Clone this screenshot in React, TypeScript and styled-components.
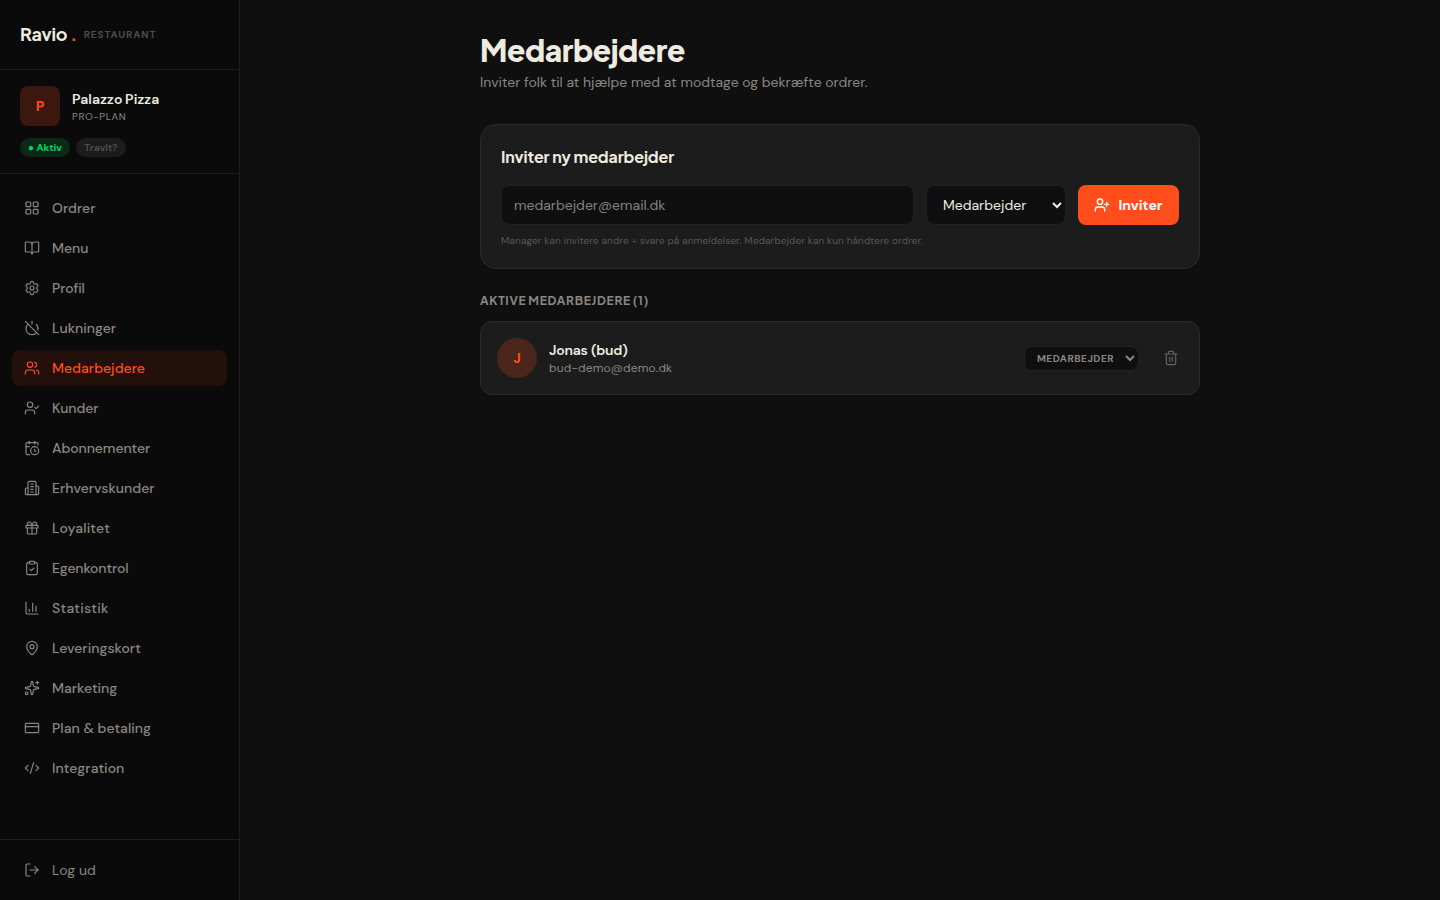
import React from "react";
import styled, { createGlobalStyle, css } from "styled-components";
import {
  LayoutGrid, BookOpen, Settings, PowerOff, Users, UserCheck, CalendarClock, Gift,
  ClipboardCheck, ChartColumn, MapPin, Sparkles, CreditCard, CodeXml, LogOut, UserPlus, Trash2,
} from "lucide-react";

const GlobalStyle = createGlobalStyle`
  *, *::before, *::after { box-sizing: border-box; }
  body { margin: 0; background: #0f0f0f; color: #f0ebe0; font-family: "DM Sans", sans-serif; font-size: 14px; line-height: 20px; }
  h1, h2, p { margin: 0; }
  button, input, select { font-family: inherit; }
`;

const display = css`font-family: "Plus Jakarta Sans", sans-serif;`;

const Shell = styled.div`display: flex; height: 100vh;`;
const Sidebar = styled.aside`
  display: flex; flex-direction: column; flex: 0 0 240px;
  background: #0a0a0a; border-right: 1px solid #1e1e1e;
`;
const Brand = styled.div`
  display: flex; align-items: center; height: 70px; padding: 0 20px; border-bottom: 1px solid #1e1e1e;
`;
const BrandName = styled.span`${display} padding-bottom: 2px; font-size: 18px; font-weight: 750; letter-spacing: -0.3px;`;
const BrandDot = styled(BrandName)`color: #ff4d1c; margin-left: 3px;`;
const BrandTag = styled.span`margin-left: 7px; font-size: 10px; font-weight: 700; letter-spacing: 0.9px; color: #4f4d49;`;
const Restaurant = styled.div`padding: 16px 20px; border-bottom: 1px solid #1e1e1e;`;
const Identity = styled.div`display: flex; align-items: center; gap: 12px;`;
const Avatar = styled.div<{ $round?: boolean }>`
  display: flex; align-items: center; justify-content: center; width: 40px; height: 40px;
  border-radius: ${(p) => (p.$round ? "50%" : "8px")};
  background: ${(p) => (p.$round ? "#4a251b" : "#3b170d")};
  color: #ff4d1c; font-weight: 700; font-size: 14px;
`;
const RestaurantName = styled.div`font-weight: 600; line-height: 20px; letter-spacing: 0.13px; word-spacing: -1px;`;
const Plan = styled.div`font-size: 10px; line-height: 15px; letter-spacing: 0.6px; color: #8a8780;`;
const Pills = styled.div`display: flex; gap: 6px; margin-top: 12px;`;
const Pill = styled.span<{ $on?: boolean }>`
  display: flex; align-items: center; justify-content: center; width: 50px; height: 19px; border-radius: 10px;
  font-size: 10px; font-weight: 700;
  ${(p) => p.$on ? css`background: #0a2917; color: #00d563;` : css`background: #1c1c1c; color: #4f4d49;`}
`;
const Nav = styled.nav`display: flex; flex-direction: column; flex: 1; gap: 4px; padding: 16px 12px;`;
const NavItem = styled.a<{ $active?: boolean; $tracking?: number }>`
  display: flex; align-items: center; gap: 12px; height: 36px; padding: 0 12px; border-radius: 8px;
  font-weight: 500; letter-spacing: ${(p) => p.$tracking ?? 0}px;
  color: ${(p) => (p.$active ? "#ff4d1c" : "#8a8780")};
  background: ${(p) => (p.$active ? "#23100a" : "transparent")};
`;
const SidebarFooter = styled.div`padding: 12px; border-top: 1px solid #1e1e1e;`;
const LogoutItem = styled(NavItem)`font-weight: 400;`;

const Main = styled.main`flex: 1; display: flex; justify-content: center;`;
const Content = styled.div`width: 720px; padding-top: 32px;`;
const Title = styled.h1`${display} font-size: 30px; line-height: 36px; font-weight: 800; letter-spacing: -0.4px;`;
const Subtitle = styled.p`margin-top: 4px; color: #8a8780;`;
const Card = styled.section`
  height: 145px; margin-top: 32px; padding: 20px; border: 1px solid #2a2a2a; border-radius: 16px; background: #1c1c1c;
`;
const CardTitle = styled.h2`${display} font-size: 16px; line-height: 24px; font-weight: 700; letter-spacing: -0.1px;`;
const InviteRow = styled.form`display: flex; gap: 12px; margin-top: 16px;`;
const EmailInput = styled.input`
  flex: 1; height: 40px; padding: 0 12px; border: 1px solid #222; border-radius: 8px;
  background: #0f0f0f; color: #f0ebe0; font-size: 14px; outline: none;
  &::placeholder { color: #85827b; opacity: 1; }
`;
const RoleSelect = styled.select`
  width: 140px; height: 40px; padding: 0 12px; border: 1px solid #222; border-radius: 8px;
  background: #0f0f0f; color: #f0ebe0; font-size: 14px;
`;
const InviteButton = styled.button`
  display: flex; align-items: center; justify-content: center; gap: 8px; width: 101px; height: 40px; padding: 0;
  border: 0; border-radius: 8px; background: #ff4d1c; color: #fff; font-size: 14px; font-weight: 700;
`;
const Hint = styled.p`margin-top: 8px; font-size: 10px; line-height: 16px; letter-spacing: 0.105px; color: #5a5853;`;
const SectionLabel = styled.h2`${display} margin-top: 24px; font-size: 12px; line-height: 16px; font-weight: 700; letter-spacing: 0.72px; word-spacing: -1px; color: #8a8780;`;
const Member = styled.div`
  display: flex; align-items: center; gap: 12px; height: 74px; margin-top: 12px; padding: 0 16px;
  border: 1px solid #2a2a2a; border-radius: 12px; background: #1c1c1c;
`;
const MemberText = styled.div`flex: 1;`;
const MemberName = styled.div`font-weight: 600; line-height: 20px; letter-spacing: -0.2px;`;
const Email = styled.div`font-size: 12px; line-height: 16px; letter-spacing: 0.16px; color: #8a8780;`;
const MemberRole = styled.select`
  width: 115px; height: 25px; padding: 0 8px; border: 1px solid #222; border-radius: 8px;
  background: #0f0f0f; color: #8a8780; font-size: 10px; font-weight: 700; letter-spacing: 0.5px;
`;
const DeleteButton = styled.button`display: flex; padding: 4px; margin-left: 8px; border: 0; background: none; color: #66635e;`;

type IconProps = { size?: number; strokeWidth?: number };

const OfficeIcon = ({ size = 16, strokeWidth = 1.75 }: IconProps) => (
  <svg width={size} height={size} viewBox="0 0 24 24" fill="none" stroke="currentColor" strokeWidth={strokeWidth} strokeLinecap="round" strokeLinejoin="round">
    <path d="M6 22V4a2 2 0 0 1 2-2h8a2 2 0 0 1 2 2v18Z" />
    <path d="M6 12H4a2 2 0 0 0-2 2v6a2 2 0 0 0 2 2h2" />
    <path d="M18 9h2a2 2 0 0 1 2 2v9a2 2 0 0 1-2 2h-2" />
    <path d="M10 6h4M10 10h4M10 14h4M10 18h4" />
  </svg>
);

type Item = { label: string; icon: React.ComponentType<IconProps>; active?: boolean; tracking?: number };

const items: Item[] = [
  { label: "Ordrer", icon: LayoutGrid },
  { label: "Menu", icon: BookOpen },
  { label: "Profil", icon: Settings, tracking: -0.12 },
  { label: "Lukninger", icon: PowerOff },
  { label: "Medarbejdere", icon: Users, active: true },
  { label: "Kunder", icon: UserCheck, tracking: -0.1 },
  { label: "Abonnementer", icon: CalendarClock, tracking: -0.08 },
  { label: "Erhvervskunder", icon: OfficeIcon },
  { label: "Loyalitet", icon: Gift, tracking: 0.2 },
  { label: "Egenkontrol", icon: ClipboardCheck, tracking: -0.15 },
  { label: "Statistik", icon: ChartColumn, tracking: 0.27 },
  { label: "Leveringskort", icon: MapPin },
  { label: "Marketing", icon: Sparkles },
  { label: "Plan & betaling", icon: CreditCard, tracking: 0.04 },
  { label: "Integration", icon: CodeXml, tracking: 0.04 },
];

export default function App() {
  return (
    <>
      <GlobalStyle />
      <Shell>
        <Sidebar>
          <Brand>
            <BrandName>Ravio</BrandName>
            <BrandDot>.</BrandDot>
            <BrandTag>RESTAURANT</BrandTag>
          </Brand>
          <Restaurant>
            <Identity>
              <Avatar>P</Avatar>
              <div>
                <RestaurantName>Palazzo Pizza</RestaurantName>
                <Plan>PRO-PLAN</Plan>
              </div>
            </Identity>
            <Pills>
              <Pill $on>● Aktiv</Pill>
              <Pill>Travlt?</Pill>
            </Pills>
          </Restaurant>
          <Nav>
            {items.map(({ label, icon: Icon, active, tracking }) => (
              <NavItem key={label} $active={active} $tracking={tracking}>
                <Icon size={16} strokeWidth={1.75} />
                {label}
              </NavItem>
            ))}
          </Nav>
          <SidebarFooter>
            <LogoutItem $tracking={0.08}>
              <LogOut size={16} strokeWidth={1.75} />
              Log ud
            </LogoutItem>
          </SidebarFooter>
        </Sidebar>
        <Main>
          <Content>
            <Title>Medarbejdere</Title>
            <Subtitle>Inviter folk til at hjælpe med at modtage og bekræfte ordrer.</Subtitle>
            <Card>
              <CardTitle>Inviter ny medarbejder</CardTitle>
              <InviteRow>
                <EmailInput placeholder="medarbejder@email.dk" />
                <RoleSelect><option>Medarbejder</option></RoleSelect>
                <InviteButton type="button">
                  <UserPlus size={16} strokeWidth={2} />
                  Inviter
                </InviteButton>
              </InviteRow>
              <Hint>Manager kan invitere andre + svare på anmeldelser. Medarbejder kan kun håndtere ordrer.</Hint>
            </Card>
            <SectionLabel>AKTIVE MEDARBEJDERE (1)</SectionLabel>
            <Member>
              <Avatar $round>J</Avatar>
              <MemberText>
                <MemberName>Jonas (bud)</MemberName>
                <Email>bud-demo@demo.dk</Email>
              </MemberText>
              <MemberRole><option>MEDARBEJDER</option></MemberRole>
              <DeleteButton type="button"><Trash2 size={16} strokeWidth={1.75} /></DeleteButton>
            </Member>
          </Content>
        </Main>
      </Shell>
    </>
  );
}
